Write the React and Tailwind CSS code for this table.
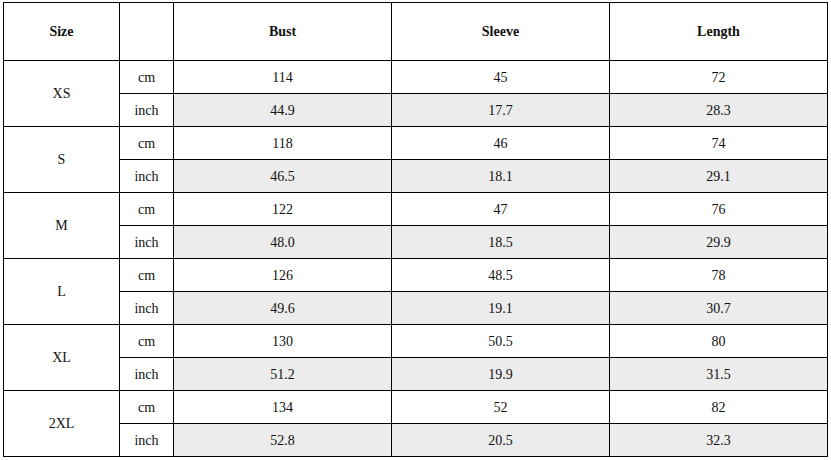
const rows = [
  { size: 'XS', cm: ['114', '45', '72'], inch: ['44.9', '17.7', '28.3'] },
  { size: 'S', cm: ['118', '46', '74'], inch: ['46.5', '18.1', '29.1'] },
  { size: 'M', cm: ['122', '47', '76'], inch: ['48.0', '18.5', '29.9'] },
  { size: 'L', cm: ['126', '48.5', '78'], inch: ['49.6', '19.1', '30.7'] },
  { size: 'XL', cm: ['130', '50.5', '80'], inch: ['51.2', '19.9', '31.5'] },
  { size: '2XL', cm: ['134', '52', '82'], inch: ['52.8', '20.5', '32.3'] },
];

const cell = 'flex items-center justify-center';

export default function App() {
  return (
    <div className="bg-white w-[831px] h-[460px] pl-[3px] pt-[2px] text-[14px] text-[#111]" style={{ fontFamily: '"Liberation Serif", "Times New Roman", serif' }}>
      <div className="grid grid-cols-[115px_53px_217px_217px_217px] grid-rows-[57px_repeat(12,32px)] gap-px bg-black border border-black w-fit">
        <div className={`${cell} bg-white font-bold`}>Size</div>
        <div className="bg-white"></div>
        <div className={`${cell} bg-white font-bold`}>Bust</div>
        <div className={`${cell} bg-white font-bold`}>Sleeve</div>
        <div className={`${cell} bg-white font-bold`}>Length</div>
        {rows.map((r) => (
          <div key={r.size} className="contents">
            <div className={`${cell} bg-white row-span-2`}>{r.size}</div>
            <div className={`${cell} bg-white`}>cm</div>
            {r.cm.map((v, i) => (
              <div key={'c' + i} className={`${cell} bg-white`}>{v}</div>
            ))}
            <div className={`${cell} bg-white`}>inch</div>
            {r.inch.map((v, i) => (
              <div key={'i' + i} className={`${cell} bg-[#ececec]`}>{v}</div>
            ))}
          </div>
        ))}
      </div>
    </div>
  );
}
